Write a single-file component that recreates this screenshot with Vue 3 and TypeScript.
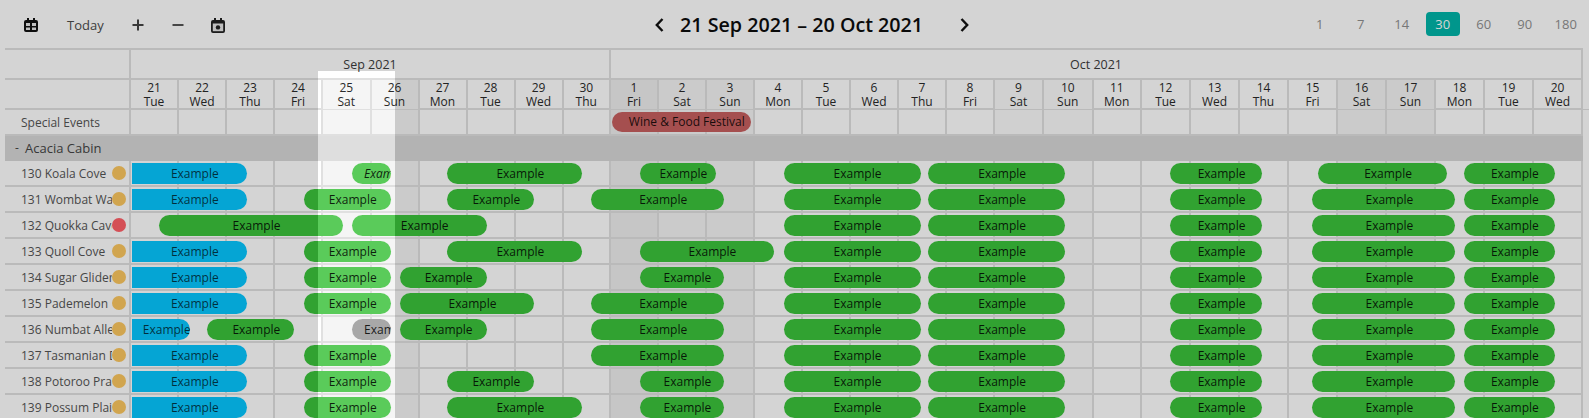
<script setup lang="ts">
type Kind = 'green' | 'blue' | 'gray'
interface Bar { from: number; to: number; kind?: Kind; italic?: boolean }

const edges = [130, 178, 226, 274, 322, 370.5, 418.5, 466.5, 514.5, 562.5, 610, 658, 706, 754, 802, 850, 898, 946, 994, 1043, 1092.5, 1141, 1190, 1239, 1288, 1337, 1386, 1435, 1484, 1533, 1582]
const names = ['Sun', 'Mon', 'Tue', 'Wed', 'Thu', 'Fri', 'Sat']
const tones: Record<string, string> = {
  '25': 'shaded', '26': 'shaded', '1': 'deep', '2': 'shaded', '3': 'shaded',
  '9': 'soft', '10': 'soft', '16': 'shaded', '17': 'shaded',
}

const days = edges.slice(1).map((_, i) => {
  const date = String(i < 10 ? 21 + i : i - 9)
  return { date, weekday: names[(i + 2) % 7], tone: tones[date] ?? '' }
})
const columns = `126px ${edges.slice(1).map((e, i) => `${e - edges[i]}px`).join(' ')}`

const blue: Bar = { from: 131.8, to: 246.8, kind: 'blue' }
const wide: Bar = { from: 303.6, to: 391 }
const a: Bar = { from: 783.5, to: 920.5 }
const b: Bar = { from: 927.9, to: 1065.4 }
const c: Bar = { from: 1170.3, to: 1261.8 }
const d: Bar = { from: 1312.4, to: 1455.4 }
const e: Bar = { from: 1464.2, to: 1554.6 }
const tail = [a, b, c, d, e]

const rows: { name: string; dot: 'amber' | 'red'; bars: Bar[] }[] = [
  { name: '130 Koala Cove', dot: 'amber', bars: [blue, { from: 351.6, to: 391, italic: true }, { from: 447.3, to: 582.4 }, { from: 639.5, to: 716.3 }, a, b, c, { from: 1317.8, to: 1447.3 }, e] },
  { name: '131 Wombat Walk', dot: 'amber', bars: [blue, wide, { from: 447.3, to: 534.4 }, { from: 591.2, to: 724.4 }, ...tail] },
  { name: '132 Quokka Cave', dot: 'red', bars: [{ from: 159, to: 343 }, { from: 351.6, to: 486.8 }, ...tail] },
  { name: '133 Quoll Cove', dot: 'amber', bars: [blue, wide, { from: 447.3, to: 582.4 }, { from: 639.5, to: 774.4 }, ...tail] },
  { name: '134 Sugar Glider', dot: 'amber', bars: [blue, wide, { from: 399.6, to: 486.8 }, { from: 639.5, to: 724.4 }, ...tail] },
  { name: '135 Pademelon', dot: 'amber', bars: [blue, wide, { from: 399.6, to: 534.4 }, { from: 591.2, to: 724.4 }, ...tail] },
  { name: '136 Numbat Alley', dot: 'amber', bars: [{ from: 131.8, to: 190.3, kind: 'blue' }, { from: 207.2, to: 294.5 }, { from: 351.6, to: 391, kind: 'gray' }, { from: 399.6, to: 486.8 }, { from: 591.2, to: 724.4 }, ...tail] },
  { name: '137 Tasmanian Devil', dot: 'amber', bars: [blue, wide, { from: 591.2, to: 724.4 }, ...tail] },
  { name: '138 Potoroo Prairie', dot: 'amber', bars: [blue, wide, { from: 447.3, to: 534.4 }, { from: 639.5, to: 724.4 }, ...tail] },
  { name: '139 Possum Plains', dot: 'amber', bars: [blue, wide, { from: 447.3, to: 582.4 }, { from: 639.5, to: 724.4 }, ...tail] },
]

const ranges = [1, 7, 14, 30, 60, 90, 180]

function place(bar: { from: number; to: number }) {
  return { left: `${bar.from - 5}px`, width: `${bar.to - bar.from}px` }
}
</script>

<template>
  <div class="page">
    <header class="toolbar">
      <div class="tools">
        <svg class="icon cal" viewBox="0 0 14 14" aria-hidden="true">
          <path d="M3 0h2v2h4V0h2v2h1a2 2 0 0 1 2 2v8a2 2 0 0 1-2 2H2a2 2 0 0 1-2-2V4a2 2 0 0 1 2-2h1z" fill="#111" />
          <path d="M2 5h4v3H2zM8 5h4v3H8zM2 9.5h4V12H2zM8 9.5h4V12H8z" fill="#e6e6e6" />
        </svg>
        <span class="today">Today</span>
        <svg class="icon plus" viewBox="0 0 12 12" aria-hidden="true">
          <path d="M6 0.5v11M0.5 6h11" stroke="#444" stroke-width="2" fill="none" />
        </svg>
        <svg class="icon minus" viewBox="0 0 12 12" aria-hidden="true">
          <path d="M0.5 6h11" stroke="#555" stroke-width="2" fill="none" />
        </svg>
        <svg class="icon event" viewBox="0 0 14 15" aria-hidden="true">
          <path d="M3 0h2v2h4V0h2v2h1a2 2 0 0 1 2 2v9a2 2 0 0 1-2 2H2a2 2 0 0 1-2-2V4a2 2 0 0 1 2-2h1z" fill="#222" />
          <rect x="1.8" y="5.5" width="10.4" height="7.7" fill="#e6e6e6" />
          <circle cx="7" cy="9.4" r="2.2" fill="#222" />
        </svg>
      </div>
      <nav class="period">
        <svg class="chev" viewBox="0 0 9 14" aria-hidden="true"><path d="M7.5 1L1.8 7l5.7 6" stroke="#111" stroke-width="2.4" fill="none" /></svg>
        <h1 class="title">21 Sep 2021 – 20 Oct 2021</h1>
        <svg class="chev next" viewBox="0 0 9 14" aria-hidden="true"><path d="M1.5 1l5.7 6-5.7 6" stroke="#111" stroke-width="2.4" fill="none" /></svg>
      </nav>
      <div class="ranges">
        <span v-for="r in ranges" :key="r" class="range" :class="{ active: r === 30 }">{{ r }}</span>
      </div>
    </header>

    <section class="sheet">
      <div class="months">
        <div class="corner"></div>
        <div class="month sep">Sep 2021</div>
        <div class="month oct">Oct 2021</div>
      </div>

      <div class="row dayrow" :style="{ gridTemplateColumns: columns }">
        <div class="cell blank"></div>
        <div v-for="day in days" :key="day.date + day.weekday" class="cell day" :class="day.tone">
          <span>{{ day.date }}</span>
          <span>{{ day.weekday }}</span>
        </div>
      </div>

      <div class="row events" :style="{ gridTemplateColumns: columns }">
        <div class="cell label"><span class="name">Special Events</span></div>
        <div v-for="day in days" :key="day.date + day.weekday" class="cell" :class="day.tone"></div>
        <div class="festival" :style="place({ from: 611.8, to: 750.8 })">Wine &amp; Food Festival</div>
      </div>

      <div class="group"><span class="toggle">-</span><span>Acacia Cabin</span></div>

      <div v-for="row in rows" :key="row.name" class="row unit" :style="{ gridTemplateColumns: columns }">
        <div class="cell label">
          <span class="name">{{ row.name }}</span>
          <i class="dot" :class="row.dot"></i>
        </div>
        <div v-for="day in days" :key="day.date + day.weekday" class="cell" :class="day.tone"></div>
        <div
          v-for="bar in row.bars"
          :key="bar.from"
          class="bar"
          :class="[bar.kind ?? 'green', { italic: bar.italic }]"
          :style="place(bar)"
        >Example</div>
      </div>
    </section>

    <div class="spotlight"></div>
  </div>
</template>

<style>
html, body { margin: 0; overflow: hidden; background: #fff; }
</style>

<style scoped>
.page {
  position: relative;
  width: 1589px;
  height: 418px;
  overflow: hidden;
  background: #fff;
  font-family: "Open Sans", "Liberation Sans", sans-serif;
  font-size: 12px;
  color: #333;
}
.toolbar {
  display: flex;
  align-items: center;
  height: 48px;
  box-sizing: border-box;
  padding-top: 2px;
}
.tools {
  flex: 0 0 655px;
  display: flex;
  align-items: center;
  padding-left: 24px;
  box-sizing: border-box;
}
.icon { display: block; flex: none; }
.cal { width: 14px; height: 14px; margin-top: -1px; }
.today { margin-left: 29px; width: 37px; font-size: 13px; color: #4c4c4c; margin-top: -1px; }
.plus { width: 12px; height: 12px; margin-left: 28px; margin-top: -1px; }
.minus { width: 12px; height: 12px; margin-left: 28px; margin-top: -1px; }
.event { width: 14px; height: 15px; margin-left: 27px; margin-top: 1px; }
.period { flex: none; display: flex; align-items: center; }
.chev { width: 9px; height: 14px; display: block; }
.next { margin-left: 37px; }
.title {
  margin: 0 0 0 16px;
  font-size: 19.7px;
  line-height: 26px;
  font-weight: 600;
  color: #0d0d0d;
  white-space: nowrap;
}
.ranges {
  margin-left: auto;
  display: flex;
  gap: 6.5px;
  padding-right: 6px;
}
.range {
  width: 34.5px;
  height: 24px;
  line-height: 24px;
  text-align: center;
  font-size: 13px;
  color: #909090;
  border-radius: 4px;
  margin-top: -2px;
}
.active { background: #00b5a9; color: #fff; }

.sheet {
  position: relative;
  margin-left: 5px;
  width: 1578px;
  border-top: 2px solid #e0e0e0;
}
.sheet::after {
  content: "";
  position: absolute;
  right: -7px;
  top: 59px;
  width: 7px;
  height: 1px;
  background: #e0e0e0;
}
.months {
  display: flex;
  box-sizing: border-box;
  height: 30px;
  border-bottom: 2px solid #e0e0e0;
  border-right: 2px solid #e0e0e0;
}
.corner { flex: 0 0 126px; box-sizing: border-box; border-right: 2px solid #e0e0e0; }
.month {
  display: flex;
  align-items: center;
  justify-content: center;
  box-sizing: border-box;
  font-size: 12.5px;
  color: #3c3c3c;
  font-weight: 500;
}
.sep { flex: 0 0 480px; border-right: 2px solid #e0e0e0; }
.oct { flex: 1; }

.row {
  position: relative;
  display: grid;
  box-sizing: border-box;
  border-bottom: 2px solid #e0e0e0;
}
.dayrow { height: 30px; }
.events { height: 26px; }
.unit { height: 26px; }
.cell {
  box-sizing: border-box;
  border-right: 2px solid #e0e0e0;
  min-width: 0;
}
.soft { background: #fafafa; }
.shaded { background: #f5f5f5; }
.deep { background: #eeeeee; }
.day {
  display: flex;
  flex-direction: column;
  align-items: center;
  padding-top: 1px;
  font-size: 12px;
  line-height: 14px;
  color: #2a2a2a;
}
.label {
  display: flex;
  align-items: center;
  padding: 0 3.5px 0 16px;
  color: #555;
}
.name { flex: 1; min-width: 0; overflow: hidden; white-space: nowrap; }
.dot { flex: none; width: 14px; height: 14px; border-radius: 50%; }
.amber { background: #fcc760; }
.red { background: #ff6068; }

.festival {
  position: absolute;
  top: 2px;
  height: 20px;
  line-height: 20px;
  box-sizing: border-box;
  padding-left: 11px;
  text-align: center;
  white-space: nowrap;
  overflow: hidden;
  border-radius: 10px;
  background: #c76060;
  color: rgba(0, 0, 0, 0.85);
}
/* The spotlighted column shows these fills brighter than the dimmed page. */
.group {
  display: flex;
  align-items: center;
  box-sizing: border-box;
  height: 25px;
  padding: 0 0 2px 10px;
  background: linear-gradient(90deg, #d8d8d8 318px, #dedede 318px, #dedede 395px, #d8d8d8 395px) fixed;
  font-size: 13px;
  color: #444;
}
.toggle { width: 10px; font-size: 12px; }

.bar {
  position: absolute;
  top: 2px;
  height: 21px;
  line-height: 21px;
  box-sizing: border-box;
  padding-left: 11px;
  text-align: center;
  white-space: nowrap;
  overflow: hidden;
  border-radius: 10.5px;
  color: rgba(0, 0, 0, 0.85);
}
.green {
  background: linear-gradient(90deg, #3bc33c 318px, #5acb5a 318px, #5acb5a 395px, #3bc33c 395px) fixed;
}
.blue {
  background: #07c7ff;
  border-radius: 0 10.5px 10.5px 0;
  color: rgba(0, 0, 0, 0.72);
}
.gray { background: #a8a8a8; padding-left: 12.5px; }
.italic { font-style: italic; padding-left: 12.5px; }

.spotlight {
  position: absolute;
  left: 318px;
  top: 71px;
  width: 77px;
  height: 400px;
  box-shadow: 0 0 1px 3000px rgba(0, 0, 0, 0.17);
  pointer-events: none;
}
</style>
